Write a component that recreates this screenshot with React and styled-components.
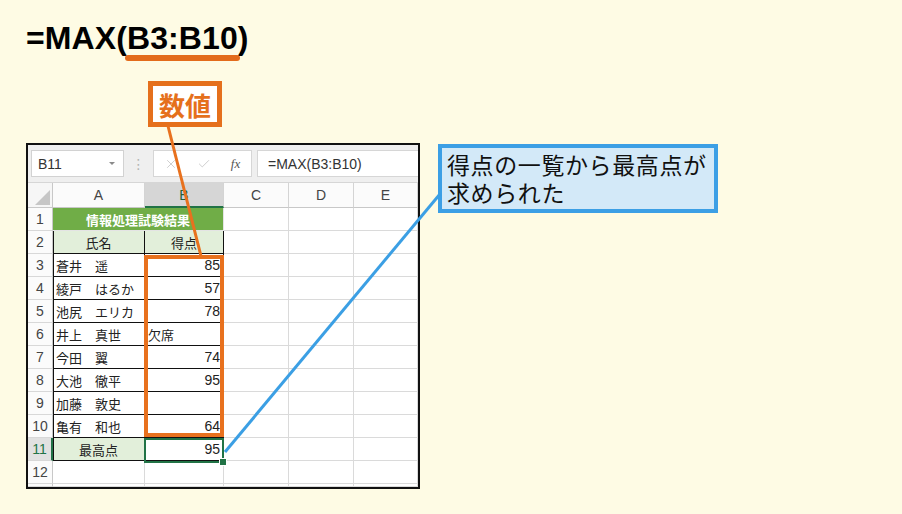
import styled, { createGlobalStyle } from "styled-components";
import { X, Check } from "lucide-react";

// 表のデータ
const rows = [
  { name: "蒼井　遥", score: "85" },
  { name: "綾戸　はるか", score: "57" },
  { name: "池尻　エリカ", score: "78" },
  { name: "井上　真世", note: "欠席" },
  { name: "今田　翼", score: "74" },
  { name: "大池　徹平", score: "95" },
  { name: "加藤　敦史" },
  { name: "亀有　和也", score: "64" },
];

const App = () => {
  return (
    <Page>
      <GlobalStyle />
      <Title>
        =MAX(<Arg>B3:B10</Arg>)
      </Title>
      <ValueTag>数値</ValueTag>
      <Main>
        <Sheet>
          <FormulaBar>
            <NameBox>
              B11
              <Caret />
            </NameBox>
            <Dots>⋮</Dots>
            <ButtonBox>
              <X size={14} strokeWidth={1.4} color="#c4c4c4" />
              <Check size={14} strokeWidth={1.4} color="#c4c4c4" />
              <Fx>fx</Fx>
            </ButtonBox>
            <FormulaInput>=MAX(B3:B10)</FormulaInput>
          </FormulaBar>
          <Grid>
            <Corner>
              <Triangle />
            </Corner>
            <ColHead>A</ColHead>
            <ColHead $active>B</ColHead>
            <ColHead>C</ColHead>
            <ColHead>D</ColHead>
            <ColHead>E</ColHead>

            <RowHead>1</RowHead>
            <Cell $span={2} $bg="#70ad47" $color="#fff" $bold $align="center" $line="#e4e4e4">
              情報処理試験結果
            </Cell>
            <Cell />
            <Cell />
            <Cell />

            <RowHead>2</RowHead>
            <Cell $bg="#e2efda" $align="center" $line="#111" $edge>
              氏名
            </Cell>
            <Cell $bg="#e2efda" $align="center" $line="#111">
              得点
            </Cell>
            <Cell />
            <Cell />
            <Cell />

            {rows.map((r, i) => [
              <RowHead key={`h${i}`}>{i + 3}</RowHead>,
              <Cell key={`a${i}`} $line="#111" $edge>
                {r.name}
              </Cell>,
              <Cell
                key={`b${i}`}
                $line="#111"
                $align={r.note ? "left" : "right"}
                $num={!r.note}
              >
                {r.score || r.note || ""}
              </Cell>,
              <Cell key={`c${i}`} />,
              <Cell key={`d${i}`} />,
              <Cell key={`e${i}`} />,
            ])}

            <RowHead $active>11</RowHead>
            <Cell $bg="#e2efda" $align="center" $line="#111" $edge>
              最高点
            </Cell>
            <Cell $line="#111" $align="right" $num>
              95
            </Cell>
            <Cell />
            <Cell />
            <Cell />

            <RowHead>12</RowHead>
            <Cell />
            <Cell />
            <Cell />
            <Cell />
            <Cell />

            <RowHead />
            <Cell />
            <Cell />
            <Cell />
            <Cell />
            <Cell />

            <RangeMark />
            <Selection>
              <Handle />
            </Selection>
          </Grid>
        </Sheet>
        <Callout>
          <CalloutLine>得点の一覧から最高点が</CalloutLine>
          <CalloutLine>求められた</CalloutLine>
        </Callout>
      </Main>
      <Lines width="902" height="514">
        <line x1="168" y1="126" x2="201" y2="256" stroke="#e8711e" strokeWidth="3" />
        <line x1="440" y1="194" x2="225" y2="452" stroke="#3b9fe4" strokeWidth="3" />
      </Lines>
    </Page>
  );
};

export default App;

const GlobalStyle = createGlobalStyle`
  body {
    margin: 0;
    background: #fefbe4;
  }
`;

const Page = styled.div`
  position: relative;
  width: 902px;
  height: 514px;
  box-sizing: border-box;
  padding: 18px 0 0 26px;
  background: #fefbe4;
  font-family: "Liberation Sans", "Noto Sans CJK JP", sans-serif;
  overflow: hidden;
`;

const Title = styled.div`
  height: 40px;
  font-size: 32px;
  line-height: 40px;
  font-weight: 700;
  letter-spacing: 0.1px;
  color: #000;
`;

const Arg = styled.span`
  position: relative;
  &::after {
    content: "";
    position: absolute;
    left: -2px;
    right: -2px;
    bottom: -5px;
    height: 6px;
    border-radius: 3px;
    background: #e36b1b;
  }
`;

const ValueTag = styled.div`
  width: 74px;
  height: 46px;
  box-sizing: border-box;
  margin: 23px 0 0 122px;
  display: flex;
  align-items: center;
  justify-content: center;
  border: 5px solid #e5701c;
  background: #fff;
  color: #e5701c;
  font-family: "Noto Sans CJK JP", sans-serif;
  font-size: 26px;
  font-weight: 700;
`;

const Main = styled.div`
  display: flex;
  align-items: flex-start;
  gap: 18px;
  margin-top: 16px;
`;

const Sheet = styled.div`
  width: 394px;
  height: 346px;
  box-sizing: border-box;
  border: 2px solid #111;
  background: #fff;
  overflow: hidden;
  display: flex;
  flex-direction: column;
`;

const FormulaBar = styled.div`
  height: 38px;
  box-sizing: border-box;
  display: flex;
  align-items: center;
  padding-left: 3px;
  background: #efefef;
  border-bottom: 1px solid #d6d6d6;
`;

const NameBox = styled.div`
  width: 93px;
  height: 27px;
  box-sizing: border-box;
  display: flex;
  align-items: center;
  justify-content: space-between;
  padding: 0 8px 0 6px;
  border: 1px solid #d2d2d2;
  background: #fff;
  color: #333;
  font-size: 14px;
`;

const Caret = styled.span`
  width: 0;
  height: 0;
  border-left: 3px solid transparent;
  border-right: 3px solid transparent;
  border-top: 3px solid #8a8a8a;
`;

const Dots = styled.div`
  width: 29px;
  text-align: center;
  color: #b4b4b4;
  font-size: 14px;
  font-family: "DejaVu Sans", sans-serif;
`;

const ButtonBox = styled.div`
  width: 99px;
  height: 27px;
  box-sizing: border-box;
  display: grid;
  grid-template-columns: 34px 32px 31px;
  align-items: center;
  justify-items: center;
  border: 1px solid #d6d6d6;
  background: #fff;
`;

const Fx = styled.span`
  font-family: "Liberation Serif", serif;
  font-style: italic;
  font-size: 13px;
  color: #555;
`;

const FormulaInput = styled.div`
  flex: 1;
  height: 27px;
  box-sizing: border-box;
  margin-left: 5px;
  display: flex;
  align-items: center;
  padding-left: 10px;
  border: 1px solid #d6d6d6;
  border-right: none;
  background: #fff;
  color: #333;
  font-size: 14px;
`;

const Grid = styled.div`
  position: relative;
  flex: 1;
  display: grid;
  grid-template-columns: 25px 92px 79px 65px 65px 1fr;
  grid-template-rows: 25px repeat(12, 23px) 1fr;
`;

const Corner = styled.div`
  box-sizing: border-box;
  display: flex;
  align-items: flex-end;
  justify-content: flex-end;
  padding: 0 2px 2px 0;
  background: #f6f6f6;
  border-right: 1px solid #c8c8c8;
  border-bottom: 1px solid #c8c8c8;
`;

const Triangle = styled.div`
  width: 0;
  height: 0;
  border-left: 15px solid transparent;
  border-bottom: 15px solid #c6c6c6;
`;

const ColHead = styled.div`
  box-sizing: border-box;
  display: flex;
  align-items: center;
  justify-content: center;
  background: ${(p) => (p.$active ? "#d6d6d6" : "#fbfbfb")};
  color: ${(p) => (p.$active ? "#1f5f3c" : "#444")};
  border-right: 1px solid #d4d4d4;
  border-bottom: ${(p) => (p.$active ? "2px solid #217346" : "1px solid #c8c8c8")};
  font-size: 14px;
`;

const RowHead = styled.div`
  box-sizing: border-box;
  display: flex;
  align-items: center;
  justify-content: center;
  background: ${(p) => (p.$active ? "#e1e1e1" : "#fbfbfb")};
  color: ${(p) => (p.$active ? "#217346" : "#444")};
  border-right: ${(p) => (p.$active ? "2px solid #217346" : "1px solid #c8c8c8")};
  border-bottom: 1px solid #d8d8d8;
  font-size: 14px;
`;

const Cell = styled.div`
  box-sizing: border-box;
  grid-column: span ${(p) => p.$span || 1};
  display: flex;
  align-items: center;
  justify-content: ${(p) =>
    p.$align === "right" ? "flex-end" : p.$align === "center" ? "center" : "flex-start"};
  padding: 0 3px;
  background: ${(p) => p.$bg || "#fff"};
  border-right: 1px solid ${(p) => p.$line || "#dadada"};
  border-bottom: 1px solid ${(p) => p.$line || "#dadada"};
  box-shadow: ${(p) => (p.$edge ? "inset 1px 0 0 #111" : "none")};
  color: ${(p) => p.$color || "#222"};
  font-size: ${(p) => (p.$num ? "14px" : "13px")};
  font-weight: ${(p) => (p.$bold ? 700 : 400)};
  white-space: pre;
`;

const RangeMark = styled.div`
  position: absolute;
  left: 116px;
  top: 72px;
  width: 80px;
  height: 182px;
  box-sizing: border-box;
  border: 4px solid #e8711e;
  pointer-events: none;
`;

const Selection = styled.div`
  position: absolute;
  left: 116px;
  top: 255px;
  width: 80px;
  height: 25px;
  box-sizing: border-box;
  border: 2px solid #217346;
  pointer-events: none;
`;

const Handle = styled.div`
  position: absolute;
  right: -5px;
  bottom: -5px;
  width: 6px;
  height: 6px;
  background: #217346;
  border: 1px solid #fff;
`;

const Callout = styled.div`
  width: 280px;
  box-sizing: border-box;
  margin-top: 1px;
  padding: 2px 4px 3px 5px;
  border: 4px solid #3c9fe5;
  background: #d3e9f8;
  color: #111;
  font-family: "Noto Sans CJK JP", sans-serif;
  font-size: 23px;
  letter-spacing: 0.6px;
  white-space: nowrap;
`;

const CalloutLine = styled.div`
  height: 28px;
  line-height: 28px;
`;

const Lines = styled.svg`
  position: absolute;
  left: 0;
  top: 0;
  pointer-events: none;
`;
